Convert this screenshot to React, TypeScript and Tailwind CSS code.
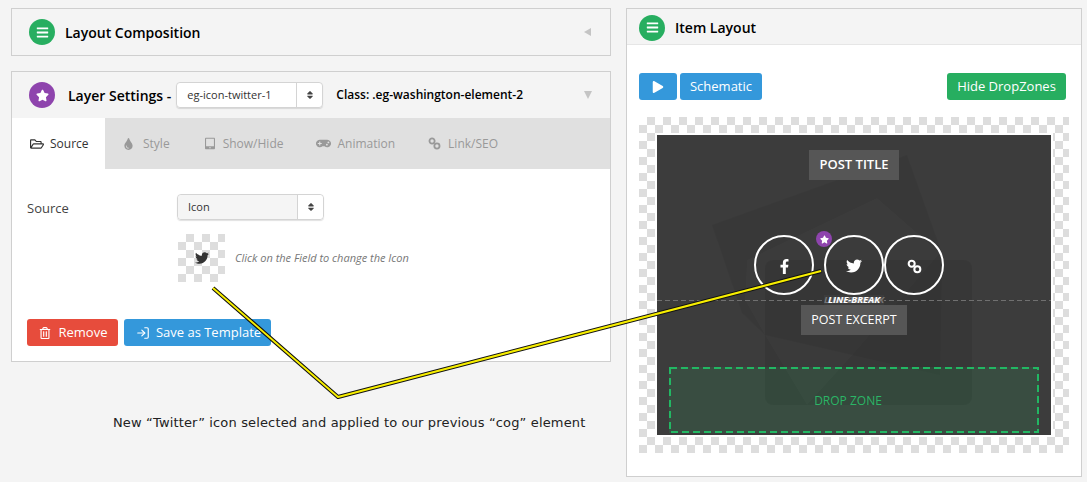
import { ReactNode } from "react"
import { LogIn } from "lucide-react"
import {
  FaBars,
  FaFacebookF,
  FaGamepad,
  FaPlay,
  FaRegFolderOpen,
  FaRegTrashAlt,
  FaSort,
  FaStar,
  FaTabletAlt,
  FaTint,
  FaTwitter,
} from "react-icons/fa"

function ChainIcon({ className }: { className?: string }) {
  return (
    <svg viewBox="0 0 16 16" fill="none" stroke="currentColor" strokeWidth="2.2" className={className}>
      <circle cx="5" cy="5" r="3.2" />
      <circle cx="11" cy="11" r="3.2" />
    </svg>
  )
}

function RoundIcon({ color, children }: { color: string; children: ReactNode }) {
  return (
    <span className={`flex h-[26px] w-[26px] shrink-0 items-center justify-center rounded-full text-white ${color}`}>
      {children}
    </span>
  )
}

function SelectBox({ label, tone, width }: { label: string; tone: string; width: string }) {
  return (
    <div className={`flex h-[26px] items-stretch rounded-[4px] border border-[#d4d4d4] text-[11px] text-[#333] shadow-[0_1px_1px_rgba(0,0,0,0.12)] ${width}`}>
      <span className={`flex flex-1 items-center rounded-l-[4px] pl-[10px] ${tone}`}>{label}</span>
      <span className="flex w-[26px] items-center justify-center rounded-r-[4px] border-l border-[#d4d4d4] bg-white">
        <FaSort className="h-[10px] w-[10px] text-[#444]" />
      </span>
    </div>
  )
}

const tabs = [
  { label: "Style", icon: <FaTint className="h-[12px] w-[9px]" />, className: "pl-[19px] pr-[17px] gap-[10px]" },
  { label: "Show/Hide", icon: <FaTabletAlt className="h-[13px] w-[10px]" />, className: "pl-[18px] pr-[16px] gap-[8px]" },
  { label: "Animation", icon: <FaGamepad className="h-[13px] w-[15px]" />, className: "pl-[17px] pr-[16px] gap-[6px]" },
  { label: "Link/SEO", icon: <ChainIcon className="h-[13px] w-[13px]" />, className: "pl-[17px] pr-[16px] gap-[7px]" },
]

function LayoutCanvas() {
  return (
    <div className="bg-[repeating-conic-gradient(#dddddd_0%_25%,#ffffff_0%_50%)] bg-[length:16px_16px] p-[16px]">
      <div className="border-2 border-white">
        <div className="relative h-[300px] overflow-hidden bg-[#3c3c3c] pt-[15px]">
          {/* faint logo shapes behind the elements */}
          <svg viewBox="0 0 394 300" className="absolute inset-0 h-[300px] w-[394px]">
            <path d="M55 90L250 20L285 118L283 240L108 200L85 178Z" fill="#000000" fillOpacity="0.05" />
            <path d="M220 63L90 125L88 165L108 200L150 270L200 215L283 118Z" fill="#ffffff" fillOpacity="0.02" />
            <rect x="108" y="125" width="207" height="145" rx="8" fill="#000000" fillOpacity="0.07" />
          </svg>

          <div className="relative flex flex-col">
            <div className="flex justify-center">
              <div className="flex h-[30px] w-[90px] items-center justify-center bg-[#565656] text-[13px] font-semibold text-white">
                POST TITLE
              </div>
            </div>

            <div className="mt-[55px] flex pl-[97px] text-white">
              <div className="flex h-[60px] w-[60px] items-center justify-center rounded-full border-2 border-white pt-[2px]">
                <FaFacebookF className="h-[15px] w-[15px]" />
              </div>
              <div className="relative ml-[10px] flex h-[60px] w-[60px] items-center justify-center rounded-full border-2 border-white pt-[2px]">
                <FaTwitter className="h-[16px] w-[16px]" />
                <span className="absolute left-[-10px] top-[-6px] flex h-[16px] w-[16px] items-center justify-center rounded-full bg-[#8e44ad]">
                  <FaStar className="h-[9px] w-[9px]" />
                </span>
              </div>
              <div className="flex h-[60px] w-[60px] items-center justify-center rounded-full border-2 border-white pt-[2px]">
                <ChainIcon className="h-[15px] w-[15px]" />
              </div>
            </div>

            <div className="relative flex h-[10px] items-center justify-center">
              <div className="absolute inset-x-0 top-[5px] h-px bg-[repeating-linear-gradient(90deg,#707070_0,#707070_5px,transparent_5px,transparent_8px)]" />
              <span className="relative bg-[#3c3c3c] px-[4px] text-[9.5px] font-bold italic leading-[10px] text-white [text-shadow:-4px_0_0_#777,4px_0_0_#777]">
                LINE-BREAK
              </span>
            </div>

            <div className="flex justify-center">
              <div className="flex h-[30px] w-[106px] items-center justify-center bg-[#565656] text-[12.5px] text-white">
                POST EXCERPT
              </div>
            </div>

            <div className="relative ml-[12px] mt-[32px] flex h-[66px] w-[370px] items-center justify-center bg-[#27ae60]/15 pr-[12px] pt-[2px] text-[12px] text-[#2bb566]">
              <svg viewBox="0 0 370 66" fill="none" className="absolute inset-0 h-[66px] w-[370px]">
                <rect x="1" y="1" width="368" height="64" stroke="#22b763" strokeWidth="2" strokeDasharray="7 4" />
              </svg>
              DROP ZONE
            </div>
          </div>
        </div>
      </div>
    </div>
  )
}

export default function App() {
  return (
    <div className="relative flex h-[482px] w-[1087px] overflow-hidden bg-[#f4f4f4] font-['Open_Sans',sans-serif] text-black">
      <div className="ml-[11px] w-[600px] pt-[8px]">
        <section className="flex h-[48px] items-center border border-[#cfcfcf] pl-[17px] pr-[19px]">
          <RoundIcon color="bg-[#27ae60]">
            <FaBars className="h-[13px] w-[13px]" />
          </RoundIcon>
          <h2 className="ml-[10px] flex-1 text-[14px] font-semibold">Layout Composition</h2>
          <span className="h-0 w-0 border-y-[4px] border-r-[7px] border-y-transparent border-r-[#c4c4c4]" />
        </section>

        <section className="mt-[15px] h-[291px] border border-[#cfcfcf] bg-white">
          <div className="flex h-[46px] items-center bg-[#f4f4f4] pl-[17px] pr-[18px]">
            <RoundIcon color="bg-[#8e44ad]">
              <FaStar className="h-[13px] w-[13px]" />
            </RoundIcon>
            <h2 className="ml-[13px] text-[14px] font-semibold">Layer Settings -</h2>
            <div className="ml-[5px]">
              <SelectBox label="eg-icon-twitter-1" tone="bg-white" width="w-[147px]" />
            </div>
            <span className="ml-[13px] flex-1 text-[12px] font-semibold">Class: .eg-washington-element-2</span>
            <span className="h-0 w-0 border-x-[4px] border-t-[8px] border-x-transparent border-t-[#c4c4c4]" />
          </div>

          <div className="flex h-[51px] items-stretch bg-[#e0e0e0] text-[12px] text-[#999]">
            <div className="flex w-[93px] items-center gap-[6px] bg-white pl-[18px] text-[#333]">
              <FaRegFolderOpen className="h-[14px] w-[14px]" />
              Source
            </div>
            {tabs.map(tab => (
              <div key={tab.label} className={`flex items-center ${tab.className}`}>
                {tab.icon}
                {tab.label}
              </div>
            ))}
          </div>

          <div className="pl-[15px] pt-[25px]">
            <div className="flex items-center">
              <span className="w-[150px] pt-[4px] text-[13px] text-[#444]">Source</span>
              <SelectBox label="Icon" tone="bg-[#f5f5f5]" width="w-[147px]" />
            </div>
            <div className="ml-[151px] mt-[14px] flex items-center">
              <div className="flex h-[48px] w-[47px] items-center justify-center bg-[repeating-conic-gradient(#dddddd_0%_25%,#ffffff_0%_50%)] bg-[length:16px_16px]">
                <FaTwitter className="h-[14px] w-[14px] text-[#333]" />
              </div>
              <span className="ml-[10px] text-[11px] italic text-[#777]">Click on the Field to change the Icon</span>
            </div>
            <div className="mt-[37px] flex gap-[6px] text-[13px] text-white">
              <button className="flex h-[27px] w-[91px] items-center justify-center gap-[8px] rounded-[3px] bg-[#e74c3c] pl-px">
                <FaRegTrashAlt className="h-[12px] w-[12px]" />
                Remove
              </button>
              <button className="flex h-[27px] w-[147px] items-center justify-center gap-[6px] rounded-[3px] bg-[#3498db] pl-[2px]">
                <LogIn className="h-[14px] w-[14px]" />
                Save as Template
              </button>
            </div>
          </div>
        </section>

        <p className="ml-[102px] mt-[52px] whitespace-nowrap font-['DejaVu_Sans',sans-serif] text-[13px] leading-[18px] tracking-[0.15px] text-[#222]">
          New “Twitter” icon selected and applied to our previous “cog” element
        </p>
      </div>

      <section className="ml-[15px] mt-[8px] h-[469px] w-[456px] border border-[#cfcfcf] bg-white">
        <div className="flex h-[36px] items-center border-b border-[#e6e6e6] bg-[#f4f4f4] pl-[12px] pt-[2px]">
          <RoundIcon color="bg-[#27ae60]">
            <FaBars className="h-[13px] w-[13px]" />
          </RoundIcon>
          <h2 className="ml-[10px] text-[14px] font-semibold">Item Layout</h2>
        </div>
        <div className="px-[12px] pt-[28px]">
          <div className="flex text-[13px] text-white">
            <button className="flex h-[27px] w-[38px] items-center justify-center rounded-[3px] bg-[#3498db]">
              <FaPlay className="h-[12px] w-[12px]" />
            </button>
            <button className="ml-[3px] flex h-[27px] w-[82px] items-center justify-center rounded-[3px] bg-[#3498db]">
              Schematic
            </button>
            <button className="ml-auto mr-[3px] flex h-[27px] w-[119px] items-center justify-center rounded-[3px] bg-[#27ae60]">
              Hide DropZones
            </button>
          </div>
          <div className="mt-[17px] w-[430px]">
            <LayoutCanvas />
          </div>
        </div>
      </section>

      {/* annotation arrow drawn over the screenshot */}
      <svg viewBox="0 0 1087 482" fill="none" className="pointer-events-none absolute inset-0 h-[482px] w-[1087px]">
        <polyline points="213,288 338,397 821,271" stroke="#111111" strokeWidth="4" strokeLinejoin="round" />
        <polyline points="213,288 338,397 821,271" stroke="#f7ee00" strokeWidth="2" strokeLinejoin="round" />
      </svg>
    </div>
  )
}
